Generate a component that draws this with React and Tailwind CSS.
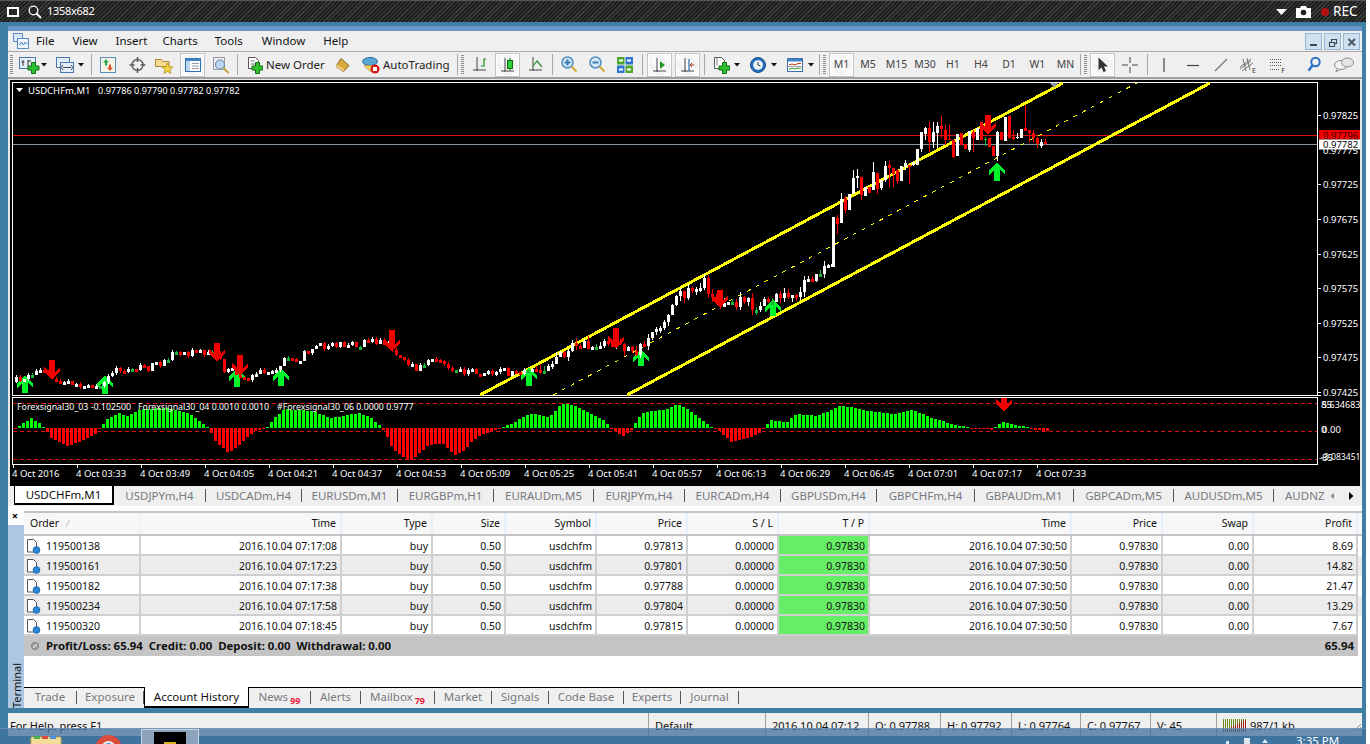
import React from 'react';

// chart geometry is in page pixels, the svg viewBox starts at the chart's page offset
const pricePath = [[16,381],[25,378],[35,372],[45,372],[55,381],[70,385],[90,385],[100,382],[115,372],[130,370],[150,367],[165,362],[175,351],[185,353],[205,352],[215,355],[225,370],[235,372],[245,380],[255,373],[265,373],[275,370],[285,360],[300,358],[310,347],[330,345],[350,344],[385,342],[395,352],[405,365],[420,368],[435,357],[445,367],[460,372],[480,372],[520,372],[530,370],[545,366],[555,358],[570,348],[590,344],[605,344],[615,340],[625,350],[635,355],[645,340],[655,330],[665,325],[675,300],[680,292],[695,288],[705,282],[712,295],[722,305],[740,300],[760,308],[775,296],[790,302],[800,295],[810,275],[830,268]];

const histPath = [[14,0],[22,5],[30,10],[38,5],[43,0],[50,-10],[67,-18],[83,-12],[95,-5],[100,1],[107,10],[117,15],[127,12],[140,19],[167,20],[187,15],[203,3],[208,-1],[213,-12],[227,-25],[240,-15],[253,-3],[263,-1],[267,2],[273,10],[283,19],[310,17],[330,10],[357,15],[370,10],[380,1],[384,-5],[391,-20],[399,-27],[409,-33],[418,-25],[426,-18],[441,-15],[453,-27],[462,-23],[472,-12],[481,-6],[495,-2],[502,1],[514,6],[525,13],[533,14],[548,11],[560,24],[568,24],[583,18],[602,8],[610,0],[613,-2],[621,-9],[629,-3],[633,3],[640,14],[648,17],[663,18],[675,24],[686,19],[701,8],[709,1],[717,-2],[730,-14],[744,-11],[757,-6],[763,1],[770,8],[786,6],[795,14],[816,12],[839,22],[851,21],[866,17],[893,14],[912,18],[931,10],[950,4],[966,1],[969,-1],[985,-1],[990,-2],[995,2],[999,5],[1003,6],[1010,4],[1020,2],[1025,1],[1030,-1],[1045,-3]];

// x, body top, body bottom, wick top, wick bottom, colour
const lastCandles = [
  [833,217,267,217,267,'w'],[837,218,224,215,234,'r'],[841,199,223,193,223,'w'],[845,198,210,196,213,'r'],[849,194,210,194,210,'w'],[853,178,194,170,194,'w'],[857,176,178,169,188,'w'],[861,177,195,177,200,'r'],[865,187,196,187,196,'w'],[869,187,193,187,193,'r'],[873,172,190,162,190,'w'],[877,173,189,173,194,'r'],[881,180,188,180,190,'w'],[885,166,180,161,182,'w'],[889,165,168,161,187,'r'],[893,168,174,168,187,'r'],[897,170,181,170,184,'r'],
  [901,166,181,166,181,'w'],[905,163,167,160,170,'w'],[909,165,167,165,184,'r'],[913,162,165,162,166,'w'],[917,149,165,149,165,'w'],[921,132,149,132,152,'w'],[925,128,134,127,140,'w'],[929,128,142,122,152,'r'],[933,132,142,122,148,'w'],[937,126,133,122,148,'w'],[941,126,129,116,138,'r'],[945,130,140,125,145,'r'],[949,139,140,125,140,'r'],[953,140,157,140,158,'r'],[957,134,156,134,156,'w'],[961,133,145,133,145,'r'],[965,144,149,144,149,'r'],[969,131,150,131,152,'w'],[973,132,138,130,152,'r'],[977,128,140,128,140,'w'],[981,122,140,122,140,'r'],[985,139,140,137,146,'g'],[989,138,147,138,147,'r'],[993,146,156,146,156,'r'],[997,132,156,131,161,'w'],[1001,132,140,132,140,'r'],[1005,117,141,117,141,'w'],[1009,116,138,116,138,'r'],[1013,137,139,130,140,'r'],[1017,137,138,133,139,'w'],[1021,129,138,129,138,'w'],[1025,128,131,105,130,'r'],[1029,130,133,130,142,'r'],[1033,133,138,130,142,'r'],[1037,138,144,137,148,'r'],[1041,142,146,139,148,'w'],[1045,142,144,139,145,'r'],
];

const interp = (path, x) => {
  for (let i = 1; i < path.length; i++) {
    if (x <= path[i][0]) {
      const [x0, y0] = path[i - 1];
      const [x1, y1] = path[i];
      return y0 + ((y1 - y0) * (x - x0)) / (x1 - x0);
    }
  }
  return path[path.length - 1][1];
};

let seed = 4711;
const rnd = () => {
  seed = (seed * 16807) % 2147483647;
  return seed / 2147483647;
};

const buildCandles = () => {
  const out = [];
  let prev = interp(pricePath, 12);
  for (let x = 16; x < 833; x += 4) {
    const amp = x > 640 ? 14 : x > 530 ? 11 : 8;
    const close = Math.round(interp(pricePath, x) + (rnd() - 0.5) * amp);
    const open = Math.round(prev);
    const top = Math.min(open, close);
    const bot = Math.max(open, close);
    const wickAmp = x > 530 ? 6 : 3;
    const flat = bot - top < 3;
    out.push([x, top, flat ? top + 3 : bot, top - Math.floor(rnd() * wickAmp), bot + Math.floor(rnd() * wickAmp), top === bot ? 'g' : close < open ? 'w' : 'r']);
    prev = close;
  }
  return out.concat(lastCandles);
};
const candles = buildCandles();

const histBars = [];
for (let x = 14; x <= 1046; x += 4) histBars.push([x, interp(histPath, x)]);

const greenArrows = [[25,375,393],[105,375,394],[237,368,387],[281,368,386],[529,367,386],[641,349,366],[773,299,316],[997,162,181]];
const redArrows = [[52,360,380],[217,343,362],[240,355,376],[392,330,352],[616,328,349],[720,290,308],[988,115,135]];

const upArrow = (c, t, b) => `${c},${t} ${c + 8},${t + 9} ${c + 8},${t + 13} ${c + 3},${t + 8} ${c + 3},${b} ${c - 3},${b} ${c - 3},${t + 8} ${c - 8},${t + 13} ${c - 8},${t + 9}`;
const downArrow = (c, t, b) => `${c},${b} ${c + 8},${b - 9} ${c + 8},${b - 13} ${c + 3},${b - 8} ${c + 3},${t} ${c - 3},${t} ${c - 3},${b - 8} ${c - 8},${b - 13} ${c - 8},${b - 9}`;

const priceLabels = [['0.97825',115],['0.97725',184],['0.97675',219],['0.97625',254],['0.97575',288],['0.97525',323],['0.97475',357],['0.97425',392]];
const timeLabels = ['4 Oct 2016','4 Oct 03:33','4 Oct 03:49','4 Oct 04:05','4 Oct 04:21','4 Oct 04:37','4 Oct 04:53','4 Oct 05:09','4 Oct 05:25','4 Oct 05:41','4 Oct 05:57','4 Oct 06:13','4 Oct 06:29','4 Oct 06:45','4 Oct 07:01','4 Oct 07:17','4 Oct 07:33'];

function Chart() {
  return (
    <svg width="1354" height="407" viewBox="8 79 1354 407" className="block text-[9.5px]">
      <rect x="8" y="79" width="1354" height="407" fill="#e8e8e8" />
      <rect x="10" y="80" width="1350" height="406" fill="#000" />
      <g shapeRendering="crispEdges">
        <rect x="12.5" y="82.5" width="1305" height="313" fill="none" stroke="#fff" />
        <rect x="12.5" y="397.5" width="1305" height="67" fill="none" stroke="#fff" />
        <line x1="13" x2="1317" y1="135.5" y2="135.5" stroke="#e01010" />
        <line x1="13" x2="1317" y1="144.5" y2="144.5" stroke="#8a98a6" />
        <line x1="480" y1="395" x2="1063" y2="83" stroke="#ffff00" strokeWidth="3" />
        <line x1="627" y1="395" x2="1210" y2="83" stroke="#ffff00" strokeWidth="3" />
        <line x1="553" y1="395" x2="1137" y2="83" stroke="#ffff00" strokeWidth="1" strokeDasharray="4 6" />
        {greenArrows.map(([c, t, b]) => <polygon key={c} points={upArrow(c, t, b)} fill="#00f52a" />)}
        {candles.map(([x, top, bot, wt, wb, col]) => {
          const fill = col === 'w' ? '#fff' : col === 'g' ? '#1fb53a' : '#f00';
          return (
            <g key={x} fill={fill}>
              <rect x={x} y={wt} width="1" height={wb - wt} />
              <rect x={x - 1} y={top} width="3" height={Math.max(bot - top, 1)} />
            </g>
          );
        })}
        {redArrows.map(([c, t, b]) => <polygon key={c} points={downArrow(c, t, b)} fill="#f00000" />)}
        {[403.5, 431.5, 459.5].map((y) => (
          <line key={y} x1="13" x2="1317" y1={y} y2={y} stroke="#e01010" strokeDasharray="4 3" />
        ))}
        {histBars.map(([x, v]) => (
          <rect key={x} x={x} y={v > 0 ? 428 - v : 428} width="3" height={Math.max(Math.abs(v), 1)} fill={v > 0 ? '#00ff00' : '#ff0000'} />
        ))}
        <polygon points={downArrow(1004, 398, 412)} fill="#f00000" />
        {timeLabels.map((t, i) => <rect key={t} x={13 + i * 64} y="465" width="1" height="3" fill="#fff" />)}
        {priceLabels.map(([t, y]) => <rect key={t} x="1318" y={y} width="3" height="1" fill="#fff" />)}
        <rect x="1318" y="395" width="3" height="1" fill="#fff" />
      </g>
      <polygon points="1050,83 1058,83 1054,88" fill="#8b98a8" />
      <polygon points="16,88 23,88 19.5,92" fill="#fff" />
      <g fill="#fff">
        <text x="28" y="93.5">USDCHFm,M1</text>
        <text x="98" y="93.5" fontSize="9.1">0.97786 0.97790 0.97782 0.97782</text>
        <text x="17" y="410" fontSize="8.8">Forexsignal30_03 -0.102500</text>
        <text x="138" y="410" fontSize="8.8">Forexsignal30_04 0.0010 0.0010</text>
        <text x="277" y="410" fontSize="8.8">#Forexsignal30_06 0.0000 0.9777</text>
        {timeLabels.map((t, i) => <text key={t} x={12 + i * 64} y="477">{t}</text>)}
        {priceLabels.map(([t, y]) => <text key={t} x="1323" y={y + 3.5}>{t}</text>)}
        <text x="1323" y="153.5">0.97775</text>
        <text x="1321" y="407.5">85</text>
        <text x="1322" y="407.5" fontSize="9">5.634683</text>
        <text x="1321" y="432.5">0</text>
        <text x="1322" y="432.5">0.00</text>
        <text x="1319" y="461">-85</text>
        <text x="1321" y="460" fontSize="8.6">-3.083451</text>
      </g>
      <rect x="1319" y="130" width="41" height="9.5" fill="#f00000" />
      <rect x="1319" y="139.5" width="41" height="10" fill="#fff" />
      <text x="1323" y="138.5" fill="#400000">0.97796</text>
      <text x="1323" y="148" fill="#000">0.97782</text>
    </svg>
  );
}

function Ico({ w, h = 18, className = '', children }) {
  return (
    <svg width={w} height={h} viewBox={`0 0 ${w} ${h}`} className={`shrink-0 ${className}`}>
      {children}
    </svg>
  );
}

const GreenPlus = ({ x, y }) => (
  <path d={`M${x + 3.5} ${y + .5}h4v3.5h3.5v4h-3.5v3.5h-4v-3.5h-3.5v-4h3.5z`} fill="#2fc02f" stroke="#136b13" strokeWidth="1" />
);

const Grip = ({ className }) => (
  <div className={`w-[3px] h-[20px] shrink-0 bg-[repeating-linear-gradient(180deg,#8f8f8f_0,#8f8f8f_1px,transparent_1px,transparent_2px)] ${className}`} />
);
const Sep = ({ className }) => <div className={`w-px h-[21px] shrink-0 bg-[#a8a8a8] ${className}`} />;
const Caret = ({ className }) => (
  <Ico w={6} h={4} className={className}><polygon points="0,0 6,0 3,3.5" fill="#111" /></Ico>
);
const Pressed = ({ className, children }) => (
  <div className={`w-[25px] h-[24px] shrink-0 flex items-center justify-center border-2 border-[#fff] outline outline-1 -outline-offset-1 outline-[#c4c4c4] bg-[#f8f8f8] bg-[repeating-linear-gradient(45deg,#ffffff_0,#ffffff_1px,#ececec_1px,#ececec_2px)] ${className || ''}`}>
    {children}
  </div>
);
const Tf = ({ className, children }) => (
  <div className={`shrink-0 text-center text-[10.5px] text-[#444] ${className}`}>{children}</div>
);

const Axes = () => <path d="M4 1v14M0 14h13" fill="none" stroke="#444" strokeWidth="1" />;

function Toolbar() {
  return (
    <div className="h-[28px] flex items-center bg-[#efefef] border-t border-b-2 border-t-[#a9a9a9] border-b-[#a0a0a0] shrink-0 text-[11.5px] text-[#222] overflow-hidden">
      <Grip className="ml-[2px]" />
      <Ico w={21} className="ml-[6px]">
        <rect x=".5" y="1.5" width="16" height="11" fill="#e8f1fb" stroke="#4a78ad" />
        <path d="M4 4v6M2.5 6h3M9 4v6M9 5h3" stroke="#333" fill="none" />
        <GreenPlus x={9} y={6} />
      </Ico>
      <Caret className="ml-[1px]" />
      <Ico w={18} className="ml-[9px]">
        <rect x=".5" y="1.5" width="13" height="10" fill="#e4eefa" stroke="#4a78ad" />
        <rect x="4.5" y="6.5" width="13" height="10" fill="#e4eefa" stroke="#4a78ad" />
        <path d="M7 11.5h8M7 9l-2 2.500 2 2.500M15 9l2 2.500-2 2.500" stroke="#444" fill="none" />
      </Ico>
      <Caret className="ml-[4px]" />
      <Sep className="ml-[7px]" />
      <Ico w={16} className="ml-[8px]">
        <rect x=".5" y="1.500" width="15" height="15" fill="#f6f3e6" stroke="#5a8fc0" />
        <path d="M6 3l-3 3.500h2v3h2v-3h2z" fill="#2aa84a" />
        <path d="M10 15l3-3.500h-2v-3h-2v3h-2z" fill="#e0522a" />
      </Ico>
      <Ico w={17} className="ml-[13px]">
        <circle cx="8.500" cy="9" r="5.500" fill="#f1f1f1" stroke="#666" strokeWidth="1.500" />
        <path d="M8.500 1v5M8.500 12v5M.5 9h5M11.500 9h5" stroke="#555" strokeWidth="1.500" />
      </Ico>
      <Ico w={18} className="ml-[9px]">
        <path d="M.5 3.500h6l1.500 2h6v5h-13.500z" fill="#f6dc8e" stroke="#a98a3a" />
        <path d="M12.500 7l1.600 3.600 3.900.4-3 2.600.9 3.900-3.400-2-3.400 2 .9-3.900-3-2.600 3.900-.4z" fill="#f2cf3c" stroke="#a98a20" strokeWidth=".7" />
      </Ico>
      <Pressed className="ml-[7px]">
        <Ico w={16} h={16}>
          <rect x=".5" y="1.500" width="15" height="13" fill="#fff" stroke="#2d6fb0" />
          <rect x=".5" y="1.500" width="15" height="2.500" fill="#3d86c6" />
          <rect x="1" y="4" width="4" height="10" fill="#bcd7ee" />
          <path d="M7 6.500h7M7 9h7M7 11.500h7" stroke="#99a" />
        </Ico>
      </Pressed>
      <Ico w={18} className="ml-[7px]">
        <rect x="1.500" y="1.500" width="11" height="12" fill="#efeff2" stroke="#9a9aa2" />
        <circle cx="8" cy="8.500" r="4.500" fill="#bcd6ee" stroke="#6a8db0" strokeWidth="1.200" />
        <path d="M11.500 12l5 5" stroke="#c9a13a" strokeWidth="2" />
      </Ico>
      <Sep className="ml-[7px]" />
      <Ico w={16} className="ml-[9px]">
        <path d="M1.500 1.500h7l3 3v8h-10z" fill="#fff" stroke="#555" />
        <path d="M3.500 5h4M3.500 8h5" stroke="#777" />
        <GreenPlus x={5} y={6} />
      </Ico>
      <span className="ml-[3px] w-[57px] shrink-0 whitespace-nowrap">New Order</span>
      <Ico w={15} className="ml-[12px]">
        <path d="M6 2.500l8 7-5.500 6-7.500-5z" fill="#d9aa3c" stroke="#8a6a1c" />
        <path d="M1 10.500l7.500 5 .5-2-7-5z" fill="#f2d27e" />
      </Ico>
      <Ico w={18} className="ml-[12px]">
        <ellipse cx="8" cy="5.500" rx="7.500" ry="4" fill="#57a6d6" stroke="#2f6e9a" />
        <path d="M2 9.500l6 6 7-6z" fill="#f1d262" stroke="#a98a20" strokeWidth=".7" />
        <circle cx="13" cy="13" r="4.500" fill="#d21a1a" />
        <rect x="11" y="11" width="4" height="4" fill="#fff" />
      </Ico>
      <span className="ml-[3px] w-[67px] shrink-0 whitespace-nowrap">AutoTrading</span>
      <Sep className="ml-[7px]" />
      <Grip className="ml-[3px]" />
      <Ico w={14} className="ml-[9px]"><Axes /><path d="M8 10h3V3h2" fill="none" stroke="#148a14" strokeWidth="1.200" /></Ico>
      <Pressed className="ml-[8px]">
        <Ico w={14} h={16}><Axes /><rect x="6.500" y="3.500" width="5" height="8" fill="#2fd03a" stroke="#0c6a12" /><path d="M9 1v2.500M9 11.500v2" stroke="#0c6a12" /></Ico>
      </Pressed>
      <Ico w={14} className="ml-[9px]"><Axes /><path d="M4 10l4-5 5 6" fill="none" stroke="#2a8f2a" strokeWidth="1.200" /></Ico>
      <Sep className="ml-[9px]" />
      <Ico w={16} className="ml-[8px]">
        <circle cx="6.500" cy="6.500" r="5.500" fill="#d5e8f7" stroke="#4f8fc2" strokeWidth="1.500" />
        <path d="M3.500 6.500h6M6.500 3.500v6" stroke="#3b7db4" strokeWidth="2" />
        <path d="M10.500 10.500l5 5" stroke="#d2a93a" strokeWidth="2.200" />
      </Ico>
      <Ico w={16} className="ml-[12px]">
        <circle cx="6.500" cy="6.500" r="5.500" fill="#d5e8f7" stroke="#4f8fc2" strokeWidth="1.500" />
        <path d="M3.500 6.500h6" stroke="#3b7db4" strokeWidth="2" />
        <path d="M10.500 10.500l5 5" stroke="#d2a93a" strokeWidth="2.200" />
      </Ico>
      <Ico w={16} className="ml-[12px]">
        <rect x="0" y="1" width="7.500" height="7.500" fill="#4fa82c" />
        <rect x="8.500" y="1" width="7.500" height="7.500" fill="#2f74d0" />
        <rect x="0" y="9.500" width="7.500" height="7.500" fill="#2f74d0" />
        <rect x="8.500" y="9.500" width="7.500" height="7.500" fill="#4fa82c" />
        <path d="M2 4.500h4M10 4.500h4M2 13.500h4M10 13.500h4" stroke="#fff" strokeWidth="2" />
      </Ico>
      <Sep className="ml-[9px]" />
      <Pressed className="ml-[4px]">
        <Ico w={14} h={16}><Axes /><polygon points="7,4 12,8 7,12" fill="#1f9a1f" /></Ico>
      </Pressed>
      <Pressed className="ml-[3px]">
        <Ico w={14} h={16}><Axes /><path d="M8 2v12" stroke="#2a6fb0" strokeWidth="1.200" /><path d="M9 8h4M11 6l-2 2 2 2" stroke="#b03a10" fill="none" /></Ico>
      </Pressed>
      <Sep className="ml-[4px]" />
      <Ico w={16} className="ml-[9px]">
        <path d="M.5 1.500h7l3 3v8h-10z" fill="#fff" stroke="#555" />
        <path d="M3 1.500v8" stroke="#777" />
        <GreenPlus x={5} y={6} />
      </Ico>
      <Caret className="ml-[4px]" />
      <Ico w={16} className="ml-[10px]">
        <circle cx="8" cy="9" r="7.500" fill="#2472c2" stroke="#164a86" />
        <circle cx="8" cy="9" r="4.800" fill="#f2f6fa" />
        <path d="M8 6v3l2.500 1" stroke="#333" fill="none" />
      </Ico>
      <Caret className="ml-[5px]" />
      <Ico w={16} className="ml-[10px]">
        <rect x=".5" y="2.500" width="15" height="13" fill="#fff" stroke="#3d6ea8" />
        <rect x="1" y="3" width="14" height="2.500" fill="#3d86c6" />
        <path d="M2 9l3-1 3 1 3-1.500h3" stroke="#b5381a" fill="none" />
        <path d="M2 13.500l3-1.500 3 1 3-1 3 .5" stroke="#2f9a2f" fill="none" />
        <path d="M1 10.500h14" stroke="#aab" />
      </Ico>
      <Caret className="ml-[5px]" />
      <Sep className="ml-[5px]" />
      <Grip className="ml-[3px]" />
      <Pressed className="ml-[3px]"><span className="text-[10.5px] text-[#444]">M1</span></Pressed>
      <Tf className="w-[28px]">M5</Tf>
      <Tf className="w-[29px]">M15</Tf>
      <Tf className="w-[28px]">M30</Tf>
      <Tf className="w-[28px]">H1</Tf>
      <Tf className="w-[28px]">H4</Tf>
      <Tf className="w-[28px]">D1</Tf>
      <Tf className="w-[29px]">W1</Tf>
      <Tf className="w-[27px]">MN</Tf>
      <Sep className="ml-[1px]" />
      <Grip className="ml-[3px]" />
      <Pressed className="ml-[3px]">
        <Ico w={12} h={16}><path d="M1.500 .5v12.500l3-2.500 2 4.500 2.500-1-2-4.500h4z" fill="#333" /></Ico>
      </Pressed>
      <Ico w={16} className="ml-[7px]"><path d="M8 1v6M8 11v6M0 9h6M10 9h6" stroke="#444" /></Ico>
      <Sep className="ml-[9px]" />
      <Ico w={14} className="ml-[9px]"><path d="M7 2v14" stroke="#444" strokeWidth="1.200" /></Ico>
      <Ico w={14} className="ml-[15px]"><path d="M1 9.500h12" stroke="#444" strokeWidth="1.200" /></Ico>
      <Ico w={14} className="ml-[14px]"><path d="M1 15L13 3" stroke="#777" strokeWidth="1.200" /></Ico>
      <div className="ml-[12px] w-[16px] h-[18px] shrink-0 relative">
        <Ico w={16} h={18}>
          <path d="M0 11l11-8M2 15l11-8M0 13l11-8M3 3l3 12M7 2l3 12" stroke="#555" fill="none" strokeWidth=".8" />
        </Ico>
        <span className="absolute right-0 bottom-0 text-[7px] leading-none text-[#333]">E</span>
      </div>
      <div className="ml-[13px] w-[16px] h-[18px] shrink-0 relative">
        <Ico w={16} h={18}>
          <path d="M1 3.500h12M1 6.500h12M1 9.500h12M1 13.500h10" stroke="#555" strokeDasharray="1 1" />
        </Ico>
        <span className="absolute right-0 bottom-0 text-[7px] leading-none text-[#333]">F</span>
      </div>
      <Ico w={14} className="ml-[22px]">
        <circle cx="8.500" cy="6" r="4.200" fill="none" stroke="#2a6fc2" strokeWidth="2" />
        <path d="M5.500 9.500l-4 5" stroke="#2a6fc2" strokeWidth="2.500" />
      </Ico>
      <Ico w={20} className="ml-[13px]">
        <ellipse cx="7" cy="9" rx="6.500" ry="4.500" fill="#f4f4f4" stroke="#8a8a8a" />
        <ellipse cx="13.500" cy="6.500" rx="6" ry="4.500" fill="#e4e4e4" stroke="#8a8a8a" />
        <path d="M3 13l-1 3 4-2.500" fill="#f4f4f4" stroke="#8a8a8a" />
      </Ico>
    </div>
  );
}

const menus = [
  ['File', 'ml-[7px]'], ['View', 'ml-[18px]'], ['Insert', 'ml-[18px]'], ['Charts', 'ml-[15px]'], ['Tools', 'ml-[17px]'], ['Window', 'ml-[19px]'], ['Help', 'ml-[18px]'],
];

function MenuBar() {
  return (
    <div className="h-[20px] flex items-center bg-[#efefef] shrink-0 text-[11.5px] text-[#111]">
      <Ico w={16} h={16} className="ml-[5px]">
        <rect x=".5" y=".5" width="9" height="8" fill="#dbe8f7" stroke="#5b8ec4" />
        <rect x="4.500" y="5.500" width="11" height="10" fill="#eef4fb" stroke="#5b8ec4" />
        <path d="M6.500 12l2-3 2 3 2-3 2 2" fill="none" stroke="#3a78b8" />
      </Ico>
      {menus.map(([m, cls]) => <span key={m} className={cls}>{m}</span>)}
      <div className="ml-auto flex gap-[2px] mr-[2px]">
        <WinBtn><path d="M4 11h7" stroke="#3d4a5a" strokeWidth="2" /></WinBtn>
        <WinBtn><path d="M4.500 8.500h5v4h-5zM6.500 8V5.500h5v4H10" fill="none" stroke="#3d4a5a" strokeWidth="1.200" /></WinBtn>
        <WinBtn><path d="M4.500 5l6.500 6.500M11 5l-6.500 6.500" stroke="#4a5a6a" strokeWidth="2" /></WinBtn>
      </div>
    </div>
  );
}

const WinBtn = ({ children }) => (
  <div className="w-[17px] h-[17px] bg-[#cfe0f0] border border-[#96b6d2] flex items-center justify-center">
    <Ico w={15} h={15}>{children}</Ico>
  </div>
);

const chartTabs = [
  ['USDJPYm,H4', 'w-[92px]'], ['USDCADm,H4', 'w-[96px]'], ['EURUSDm,M1', 'w-[96px]'], ['EURGBPm,H1', 'w-[96px]'], ['EURAUDm,M5', 'w-[100px]'], ['EURJPYm,H4', 'w-[91px]'], ['EURCADm,H4', 'w-[96px]'], ['GBPUSDm,H4', 'w-[96px]'], ['GBPCHFm,H4', 'w-[98px]'], ['GBPAUDm,M1', 'w-[99px]'], ['GBPCADm,M5', 'w-[100px]'], ['AUDUSDm,M5', 'w-[100px]'],
];

function ChartTabs() {
  return (
    <div className="h-[20px] flex items-start bg-[#efefef] shrink-0 text-[11.5px] overflow-hidden">
      <div className="ml-[6px] w-[100px] h-[19px] shrink-0 bg-white border border-black border-t-0 border-r-2 border-b-2 flex items-center justify-center text-[#111]">USDCHFm,M1</div>
      {chartTabs.map(([t, w]) => (
        <div key={t} className={`${w} shrink-0 h-[19px] flex items-center justify-center`}>
          <span className="flex-1 text-center text-[#777a80] whitespace-nowrap">{t}</span>
          <span className="w-px h-[13px] bg-[#555]" />
        </div>
      ))}
      <span className="ml-[11px] h-[19px] w-[44px] shrink-0 flex items-center overflow-hidden text-[#777a80]">AUDNZ</span>
      <Ico w={6} h={19}><polygon points="5,7 1.500,10 5,13" fill="#888" /></Ico>
      <Ico w={6} h={19} className="ml-[13px]"><polygon points="1,6 5.500,10 1,14" fill="#000" /></Ico>
    </div>
  );
}

const gridCols = 'grid grid-cols-[117px_201px_91px_73px_91px_91px_91px_91px_202px_91px_91px_104px]';
const headers = ['Time', 'Type', 'Size', 'Symbol', 'Price', 'S / L', 'T / P', 'Time', 'Price', 'Swap', 'Profit'];
const orders = [
  ['119500138', '2016.10.04 07:17:08', '0.97813', '8.69'],
  ['119500161', '2016.10.04 07:17:23', '0.97801', '14.82'],
  ['119500182', '2016.10.04 07:17:38', '0.97788', '21.47'],
  ['119500234', '2016.10.04 07:17:58', '0.97804', '13.29'],
  ['119500320', '2016.10.04 07:18:45', '0.97815', '7.67'],
];

const Cell = ({ className = '', children }) => (
  <div className={`h-[20px] flex items-center justify-end pr-[3px] pt-[4px] border-r-2 border-b-2 border-[#cfcfcf] whitespace-nowrap ${className}`}>{children}</div>
);

const DocIcon = () => (
  <Ico w={15} h={16} className="ml-[2px] mr-[5px] -mt-[3px]">
    <path d="M1.500 1.500h6l3 3v9.500h-9z" fill="#fff" stroke="#555" />
    <circle cx="10.500" cy="12" r="3.500" fill="#2a85d8" stroke="#1a5a9a" strokeWidth=".6" />
  </Ico>
);

function Terminal() {
  return (
    <div className="h-[202px] flex shrink-0 bg-white">
      <div className="w-[16px] shrink-0 flex flex-col bg-[#aec6e0]">
        <div className="h-[19px] bg-white flex items-center justify-center text-[11px] font-bold leading-none text-black pr-[2px]">
          <span>×</span>
        </div>
        <div className="flex-1 flex items-end justify-center">
          <span className="[writing-mode:vertical-rl] rotate-180 text-[11px] leading-none text-[#111] pb-[1px]">Terminal</span>
        </div>
      </div>
      <div className="flex-1 min-w-0 flex flex-col text-[10.5px] text-[#111]">
        <div className="h-[5px] shrink-0" />
        <div className="h-[25px] shrink-0 bg-[#f7f7f7] border-t-2 border-b-2 border-[#c4c4c4] grid grid-cols-[117px_201px_91px_73px_91px_91px_91px_91px_202px_91px_91px_104px]">
          <div className="flex items-center pl-[6px] border-r border-[#e6f0fa]">Order<span className="ml-[8px] text-[#aaa] text-[9px]">⁄</span></div>
          {headers.map((h, i) => (
            <div key={i} className="flex items-center justify-end pr-[4px] border-r-2 border-[#e6f0fa]">{h}</div>
          ))}
        </div>
        {orders.map((o, i) => (
          <div key={o[0]} className={`${gridCols} ${i % 2 ? 'bg-[#ececec]' : 'bg-white'}`}>
            <Cell className="!justify-start"><DocIcon />{o[0]}</Cell>
            <Cell>{o[1]}</Cell>
            <Cell>buy</Cell>
            <Cell>0.50</Cell>
            <Cell>usdchfm</Cell>
            <Cell>{o[2]}</Cell>
            <Cell>0.00000</Cell>
            <Cell className="bg-[#66ee66]">0.97830</Cell>
            <Cell>2016.10.04 07:30:50</Cell>
            <Cell>0.97830</Cell>
            <Cell>0.00</Cell>
            <Cell>{o[3]}</Cell>
          </div>
        ))}
        <div className="h-[20px] shrink-0 w-[1334px] bg-[#c4c4c4] flex items-center font-bold text-[#111] text-[11.4px]">
          <Ico w={10} h={10} className="ml-[6px] mr-[6px]"><circle cx="5" cy="5" r="3.500" fill="#aaa" stroke="#777" /><path d="M3 7l4-4" stroke="#eee" /></Ico>
          <span className="whitespace-pre">Profit/Loss: 65.94  Credit: 0.00  Deposit: 0.00  Withdrawal: 0.00</span>
          <span className="ml-auto pr-[4px]">65.94</span>
        </div>
        <div className="flex-1" />
        <TerminalTabs />
      </div>
    </div>
  );
}

const termTabs = [
  ['Trade', 'w-[53px]', ''], ['Exposure', 'w-[67px]', ''], null, ['News', 'w-[62px]', '99'], ['Alerts', 'w-[50px]', ''], ['Mailbox', 'w-[74px]', '79'], ['Market', 'w-[57px]', ''], ['Signals', 'w-[57px]', ''], ['Code Base', 'w-[75px]', ''], ['Experts', 'w-[57px]', ''], ['Journal', 'w-[58px]', ''],
];

function TerminalTabs() {
  return (
    <div className="h-[21px] shrink-0 flex bg-[#efefef] border-t border-black text-[11.5px] text-[#777a80]">
      {termTabs.map((t) => t === null ? (
        <div key="active" className="w-[105px] h-[21px] -mt-[1px] shrink-0 bg-white border-x border-b-2 border-black flex items-center justify-center text-[#111]">Account History</div>
      ) : (
        <div key={t[0]} className={`${t[1]} h-[18px] shrink-0 flex items-center`}>
          <span className="flex-1 text-center whitespace-nowrap">
            {t[0]}
            {t[2] && <span className="relative top-[3px] ml-[2px] text-[9px] font-bold text-[#f02040]">{t[2]}</span>}
          </span>
          <span className="w-px h-[13px] bg-[#555]" />
        </div>
      ))}
    </div>
  );
}

const statusItems = [
  ['Default', 'w-[117px]'], ['2016.10.04 07:12', 'w-[103px]'], ['O: 0.97788', 'w-[72px]'], ['H: 0.97792', 'w-[71px]'], ['L: 0.97764', 'w-[69px]'], ['C: 0.97767', 'w-[70px]'], ['V: 45', 'w-[66px]'],
];

const meterBars = [0, 2, 4, 6, 8, 10, 12, 14, 16, 18, 20, 22];

function StatusBar() {
  return (
    <div className="h-[23px] shrink-0 flex bg-[#efefef] text-[11px] text-[#111] pl-[2px] relative">
      <div className="w-[638px] pt-[5px] shrink-0">For Help, press F1</div>
      {statusItems.map(([s, w]) => (
        <div key={s} className={`${w} shrink-0 border-l border-[#a0a0a0] pl-[6px] pt-[5px] h-[23px]`}>{s}</div>
      ))}
      <div className="border-l border-[#a0a0a0] pl-[6px] pt-[5px] flex items-start gap-[4px] h-[23px]">
        <Ico w={23} h={13} className="mt-[1px]">
          {meterBars.map((x, i) => (
            <g key={x}>
              <rect x={x} y="0" width="1" height="13" fill="#6a8a1a" />
              <rect x={x} y={12 - i} width="1" height={i + 1} fill="#9a2010" />
            </g>
          ))}
        </Ico>
        <span>987/1 kb</span>
      </div>
      <Ico w={9} h={9} className="absolute right-0 bottom-[4px]">
        <path d="M8 1L1 8M8 4L4 8M8 7L7 8" stroke="#999" />
      </Ico>
    </div>
  );
}

function Taskbar() {
  return (
    <div className="absolute left-0 right-0 top-[728px] h-[16px] bg-[#40709e]/75 border-t border-[#7f9cb8]/60 overflow-hidden">
      <div className="flex h-full relative">
        <Ico w={32} h={16} className="ml-[30px] mt-[6px]">
          <rect x="1" y="2" width="30" height="16" rx="1" fill="#f4dc96" stroke="#c9a95a" />
          <rect x="4" y="1" width="6" height="3" fill="#4caf50" />
          <rect x="12" y="1" width="6" height="3" fill="#d84a3a" />
          <rect x="20" y="1" width="6" height="3" fill="#4a90d8" />
        </Ico>
        <Ico w={27} h={16} className="ml-[33px] mt-[5px]">
          <circle cx="13.500" cy="14" r="13" fill="#dd4b3a" />
          <path d="M3 20a13 13 0 0 1 21 0z" fill="#f4c20d" />
          <circle cx="13.500" cy="14" r="6" fill="#4a8ae0" stroke="#eee" strokeWidth="2" />
        </Ico>
        <div className="ml-[19px] w-[58px] h-[16px] bg-[#8ca3bb] border border-[#c8d4e0] flex justify-center">
          <div className="w-[32px] h-[14px] mt-[2px] bg-black flex justify-center">
            <span className="w-[12px] h-[3px] mt-[10px] bg-[#d8b020]" />
          </div>
        </div>
        <Ico w={48} h={16} className="ml-[1025px] mt-[1px]">
          <path d="M2 11h3v4H2zM20 8h6v7h-6zM41 9l3 4h-6z" fill="#dfe7ef" />
        </Ico>
        <span className="ml-[24px] text-[11.5px] text-white leading-none mt-[6px] whitespace-nowrap">3:35 PM</span>
      </div>
    </div>
  );
}

export default function App() {
  return (
    <div className="relative w-[1366px] h-[744px] overflow-hidden bg-[#3f7fa3] font-['Noto_Sans',sans-serif]">
      {/* capture tool bar */}
      <div className="h-[22px] flex items-center text-white bg-[#262626] bg-[repeating-linear-gradient(135deg,#3d3d3d_0,#3d3d3d_1px,#202020_1px,#202020_3px)] border-t border-[#555]">
        <div className="ml-[7px] w-[12px] h-[10px] shrink-0 border-2 border-white" />
        <Ico w={14} h={14} className="ml-[9px]">
          <circle cx="5.500" cy="5.500" r="4.300" fill="none" stroke="#fff" strokeWidth="1.300" />
          <path d="M8.500 8.500l4.500 4.500" stroke="#fff" strokeWidth="2" />
        </Ico>
        <span className="ml-[5px] w-[47px] shrink-0 text-[11px] tracking-[-0.3px] whitespace-nowrap">1358x682</span>
        <Ico w={11} h={6} className="ml-[1182px]"><polygon points="0,0 11,0 5.500,6" fill="#fff" /></Ico>
        <Ico w={15} h={12} className="ml-[9px]">
          <path d="M0 2h4l1-2h5l1 2h4v10H0z" fill="#fff" />
          <circle cx="7.500" cy="6.500" r="2.800" fill="#222" />
        </Ico>
        <span className="ml-[10px] w-[8px] h-[8px] shrink-0 rounded-full bg-[#b01010]" />
        <span className="ml-[4px] text-[13.500px] leading-none whitespace-nowrap">REC</span>
      </div>

      <div className="pt-[4px] pl-[8px] pr-[4px] flex flex-col">
        <div className="h-[5px] shrink-0 bg-[#6a95c8]" />
        <MenuBar />
        <Toolbar />
        <Chart />
        <ChartTabs />
        <Terminal />
        <div className="h-[5px] shrink-0" />
        <StatusBar />
      </div>

      <Taskbar />
    </div>
  );
}
